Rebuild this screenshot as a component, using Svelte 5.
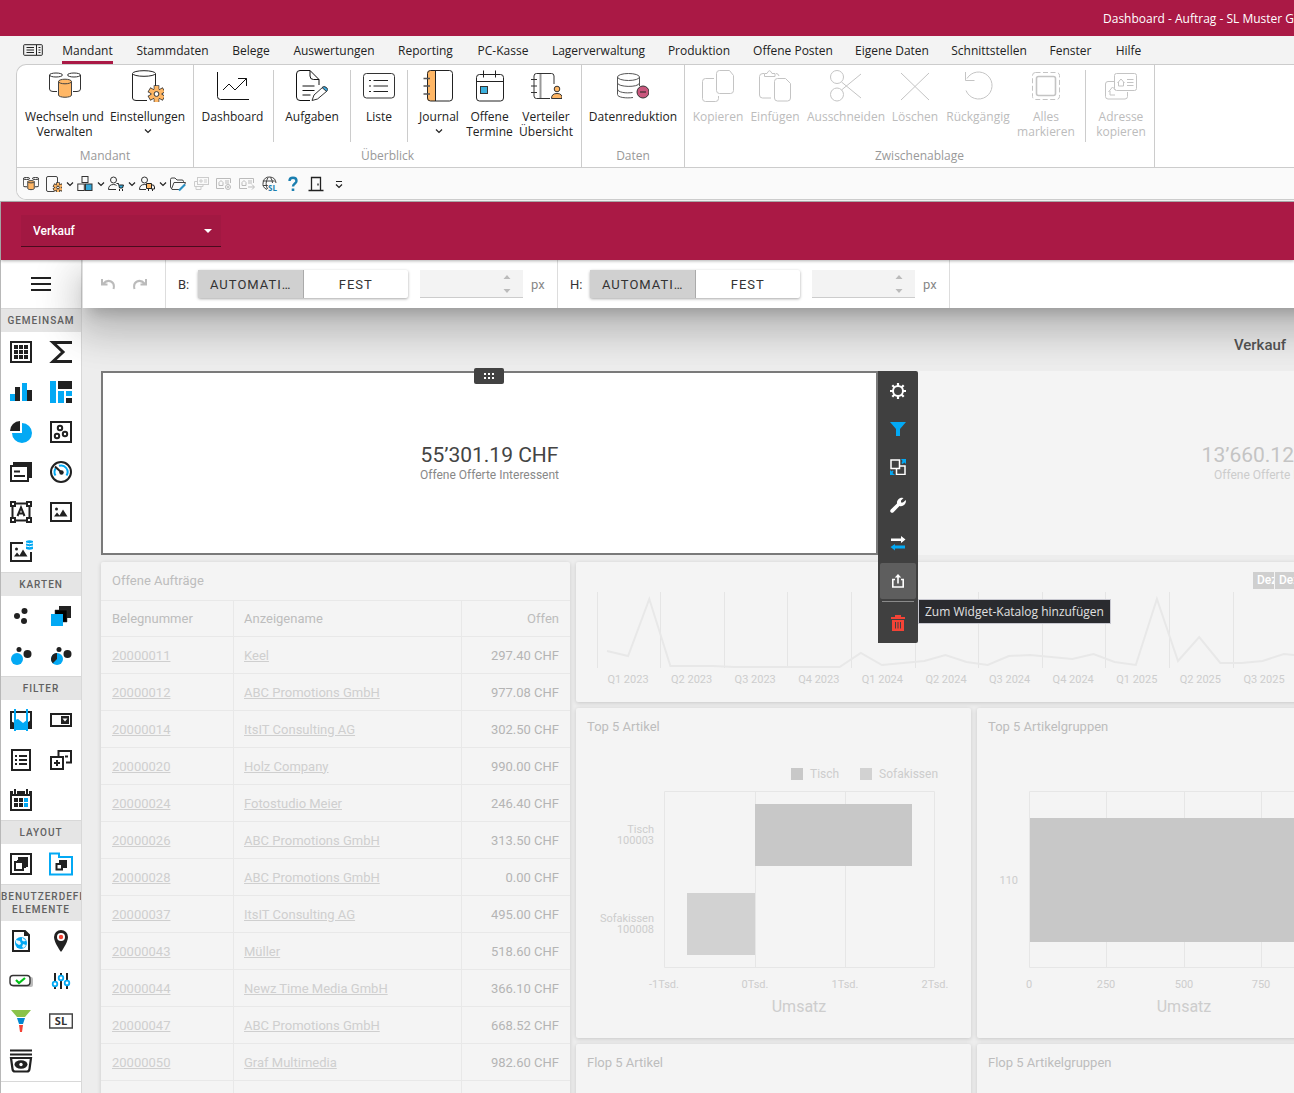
<script lang="ts">
  type RibbonItem = { sep?: boolean; label?: string; icon?: string; width?: number; drop?: boolean };
  type RibbonGroup = { name: string; disabled?: boolean; items: RibbonItem[] };

  const gear = (cx: number, cy: number, r: number, fill: string) => {
    const teeth = [0, 60, 120, 180, 240, 300]
      .map((a) => `<rect x="${cx - r * 0.26}" y="${cy - r}" width="${r * 0.52}" height="${r * 0.5}" transform="rotate(${a} ${cx} ${cy})"/>`)
      .join('');
    return `<g fill="${fill}" stroke="#333" stroke-width="1.4">${teeth}</g><circle cx="${cx}" cy="${cy}" r="${r * 0.68}" fill="${fill}" stroke="#333" stroke-width=".8"/><g fill="${fill}">${teeth}</g><circle cx="${cx}" cy="${cy}" r="${r * 0.3}" fill="#fff" stroke="#333"/>`;
  };

  const cylinders = `<g stroke="#333"><path d="M8 21.5H4Q.5 21.5.5 19V5"/><ellipse cx="7" cy="5" rx="6.5" ry="2"/><path d="M24 21.5h4q3.5 0 3.500-2.5V5"/><ellipse cx="25" cy="5" rx="6.5" ry="2"/></g><path d="M9.500 11.500V25c0 3 13 3 13 0V11.500z" fill="#ffb766" stroke="#444"/><ellipse cx="16" cy="11.500" rx="6.500" ry="2.300" fill="#ffb766" stroke="#444"/>`;

  // 32px ribbon icons
  const big: Record<string, string> = {
    cylinders,
    settings: `<path d="M15 30.5H4Q.5 30.5.5 28V4M23.5 4v12" stroke="#222"/><ellipse cx="12" cy="3.5" rx="11.5" ry="2.8" stroke="#222"/>${gear(24.5, 24, 8, '#ffb766')}`,
    trend: `<path d="M.5 2v24.5q0 3 3 3H32" stroke="#111"/><path d="M6 20l6-6 6 6L29.5 8.500M21 8.500h8.500V16" stroke="#111"/>`,
    tasks: `<path d="M14 30.5H4Q.5 30.5.5 27V4Q.5.5 4 .5h10l9 9V15M14 .5V6q0 3.500 3.500 3.500H23M6.500 16h12M6.500 20.500h12M6.500 25h8" stroke="#111"/><path d="M16 30.500l2-5.500 9-8 4 4-9.500 8z" stroke="#333" fill="#fff"/><path d="M26 17.500q2-2 4.500 0t0 4z" fill="#3ba7dd" stroke="#333"/>`,
    list: `<rect x=".5" y="3.5" width="31" height="24.5" rx="3" stroke="#333"/><path d="M10.500 10.500H25M10.500 16H25M10.500 21.500H25M6 10.500h2M6 16h2M6 21.500h2" stroke="#222"/>`,
    journal: `<path d="M7 .5h6v30.500H7q-3 0-3-3v-24q0-3.500 3-3.500z" fill="#ffb766"/><rect x="4.500" y=".5" width="25" height="30.500" rx="3" stroke="#222"/><path d="M12.500.5V31" stroke="#222"/><path d="M.5 8.500H7M.5 16H7M.5 24H7" stroke="#555" stroke-width="1.5"/>`,
    calendar: `<rect x="2.500" y="4.500" width="27" height="26.500" rx="3" stroke="#222"/><path d="M2.500 11.500h27M9.500.5v7M21.500.5v7" stroke="#222"/><rect x="6.500" y="16.500" width="7" height="7" fill="#3bb0dd" stroke="#333"/>`,
    distribution: `<path d="M20 28.500H6.500q-2.500 0-2.500-2.500V6q0-2.500 2.500-2.500h15q2.500 0 2.500 2.500v8M1 9.500h6M1 16h6M1 22.500h6" stroke="#333"/><path d="M10.500 4v24" stroke="#999" stroke-width="2"/><circle cx="27" cy="19" r="2.800" fill="#ffb766" stroke="#333"/><path d="M21.500 28.500q0-5 5.500-5t5 5z" fill="#ffb766" stroke="#333"/>`,
    reduction: `<g stroke="#555"><ellipse cx="11.500" cy="7" rx="11" ry="3.500"/><path d="M.5 7v17.500c0 3 9 4 15.500 3M22.500 7v9M.5 13c0 4 21 5 22 0M.5 19c0 3.500 9 4.500 15 3.500"/></g><circle cx="26" cy="22" r="6" fill="#c9577d" stroke="#333"/><path d="M23 22h6" stroke="#222"/>`,
    copy: `<path d="M12 8.500H3.500Q.5 8.500.5 11.500v17q0 3 3 3h10q3 0 3-3V26"/><path d="M17.500.5h10l4 5v15q0 3-3 3h-11q-3 0-3-3v-17q0-3 3-3z"/>`,
    paste: `<path d="M5 3.500H4Q.5 3.500.5 6.500v18.500q0 3 3 3H12M17 3.500q2.500 0 3 2.500"/><path d="M5.500 6.500V3.500h2.500q2.500-5.500 5 0H16v3z"/><path d="M18.500 8.500h8l5 5v14.500q0 3-3 3h-10q-3 0-3-3V11.500q0-3 3-3z"/>`,
    cut: `<circle cx="7" cy="7" r="6.500"/><circle cx="7" cy="24.500" r="6.500"/><path d="M11.500 12L31 28M11.500 20L31 4"/>`,
    remove: `<path d="M2 3l28 27M30 3L2 30"/>`,
    undo: `<path d="M4 20.500A13.500 13.500 0 1 0 5 8.500"/><path d="M3.500 2v8.500h9"/>`,
    selectAll: `<rect x="2.500" y="2.500" width="27" height="27" rx="3" stroke-dasharray="5 2.500"/><rect x="6.500" y="6.500" width="19" height="19" rx="2" stroke-width="1.6"/>`,
    address: `<path d="M9 11.500H3Q.5 11.500.5 14v12.500q0 2.500 2.500 2.500h17q2.500 0 2.500-2.500V22M3.500 22l4-5 3 3M5 21v4h5"/><rect x="9.500" y="3.500" width="22" height="17" rx="2"/><path d="M12.500 13l3.500-4 3.500 4M13.500 12v4h5v-4M22 9.500h6.500M22 12.500h6.500M22 15.500h6.500"/>`
  };

  // 16px quick access icons
  const small: Record<string, string> = {
    cylinders: `<g transform="scale(.5)" stroke-width="2">${cylinders}</g>`,
    settings: `<path d="M8 15.500H2Q.5 15.500.5 14V2Q.5.500 2 .5h8q1.500 0 1.500 1.500v6" stroke="#444"/>${gear(12, 11.5, 4.5, '#ffb766')}`,
    cubes: `<g stroke="#333"><rect x="5" y=".5" width="6" height="6"/><rect x=".8" y="8" width="6.500" height="6.500"/><rect x="8.500" y="8" width="6.500" height="6.500" fill="#35a7d8"/></g>`,
    customer: `<g stroke="#333"><circle cx="5.500" cy="4" r="3"/><path d="M8 13.500H.5q0-5 5-5 2 0 3 1"/></g><path d="M8.500 7.500h2l1 4.500h3l1-3h-4" stroke="#222" fill="#35a7d8"/><path d="M11 14h1M14 14h1" stroke="#222" stroke-width="2"/>`,
    supplier: `<g stroke="#333"><circle cx="5.500" cy="4" r="3"/><path d="M7 13.500H.5q0-5 5-5 2 0 3 1"/></g><path d="M7.500 7.500h5v5h-5z" fill="#ffb766" stroke="#222"/><path d="M12.500 9h2l1 2v2h-3z" stroke="#222"/><path d="M9 14h1M13 14h1" stroke="#222" stroke-width="2"/>`,
    folder: `<path d="M9 13.500H2L.5 11V3.500Q.5 2 2 2h3l2 2h5q1.500 0 1.500 1.500V6M1.500 13L4 6.500h11.500l-1 2.500" stroke="#444"/><path d="M9 14.500l6-6" stroke="#2b8fc4" stroke-width="2.200"/>`,
    cards: `<g stroke="#ccc"><rect x="4.500" y="1.500" width="11" height="7"/><path d="M4 5.500H1.500v5H10V9M3 10.500v3h5V11M7 4h2v2H7zM11 4h3M11 6h3"/></g>`,
    cardGear: `<g stroke="#bbb"><path d="M8 12.500H.5v-10h14V7M3 6.500l2-2 2 2v3H3zM9 5h4M9 7h4"/><circle cx="12" cy="11" r="2.500"/><circle cx="12" cy="11" r=".8"/></g>`,
    cardArrow: `<g stroke="#bbb"><path d="M8 12.500H.5v-10h14V7M3 6.500l2-2 2 2v3H3zM9 5h4M9 7h4M9 11h6M13 8.500l2.500 2.500-2.500 2.500"/></g>`,
    globe: `<g stroke="#444"><path d="M5 13.500A6.500 6.500 0 1 1 14 7"/><path d="M5.500 13Q2.500 7.500 6 1.500M8.500 1.500Q10.500 4 10.500 7M.8 5h12M.8 9.500h5"/></g><text x="6" y="15" font-family="Open Sans, sans-serif" font-size="8" font-weight="700" fill="#1b7fb0">SL</text>`,
    help: `<path d="M4.500 5Q4.500 1.800 8 1.800T11.500 5C11.500 7.500 8 7.500 8 10.500" stroke="#1b7fb0" stroke-width="2.400"/><path d="M8 12.500v2.500" stroke="#1b7fb0" stroke-width="2.600"/>`,
    door: `<path d="M.5 14.500h15M3.500 14.500v-13h9v13M10 7.500v2" stroke="#222" stroke-width="1.300"/>`,
    more: `<path d="M5 5.500h6M5 8.500l3 3 3-3" stroke="#222" stroke-width="1.200"/>`
  };

  const K = '#212121';
  const B = '#03a9f4';
  // 24px toolbox icons
  const tool: Record<string, string> = {
    grid: `<path d="M2 2h20v20H2z" stroke="${K}" stroke-width="2"/><path d="M5 5h14v14H5z" fill="${K}"/><path d="M5 9.500h14M5 14.500h14M9.500 5v14M14.500 5v14" stroke="#fff"/>`,
    pivot: `<path d="M23 2.500H4L14 12 4 21.500h19" stroke="${K}" stroke-width="3"/>`,
    bars: `<path d="M1 14h5v7H1zM13 3h5v18h-5z" fill="${B}"/><path d="M6 7h5v14H6zM18 10h5v11h-5z" fill="${K}"/>`,
    treemap: `<path d="M1 1h6v22H1zM9 11h6v12H9zM17 11h6v5h-6z" fill="${B}"/><path d="M9 1h14v8H9zM17 18h6v5h-6z" fill="${K}"/>`,
    pie: `<path d="M13 3A10 10 0 1 1 3 13h10z" fill="${B}"/><path d="M11 1v10H1A10 10 0 0 1 11 1z" fill="${K}"/>`,
    scatter: `<path d="M2 2h20v20H2z" stroke="${K}" stroke-width="2"/><g stroke="${K}" stroke-width="2"><circle cx="11" cy="8" r="2.200"/><circle cx="8" cy="16" r="2.200"/><circle cx="16" cy="14" r="2.200"/></g>`,
    card: `<path d="M4 2h19v16h-3V5H4z" fill="${K}"/><path d="M2 6h17v15H2z" stroke="${K}" stroke-width="2" fill="#fff"/><path d="M5 11.500h6M5 16h11" stroke="${K}" stroke-width="1.800"/>`,
    gauge: `<circle cx="12" cy="12" r="10" stroke="${K}" stroke-width="2"/><path d="M6.500 15.500A6.500 6.500 0 0 1 7 8M10 5.800A6.500 6.500 0 0 1 17.500 15.500" stroke="${B}" stroke-width="2"/><path d="M6 6.500l6 5.500" stroke="${K}" stroke-width="2"/><circle cx="12.500" cy="12.500" r="2.200" fill="${K}"/>`,
    textbox: `<path d="M3.500 3.500h17v17h-17z" stroke="${K}" stroke-width="2"/><g fill="#fff" stroke="${K}" stroke-width="2"><path d="M2 2h4v4H2zM18 2h4v4h-4zM2 18h4v4H2zM18 18h4v4h-4z"/></g><path d="M8.500 16L12 7.500 15.500 16M9.500 13.500h5" stroke="${K}" stroke-width="2"/>`,
    image: `<path d="M2 3h20v18H2z" stroke="${K}" stroke-width="2"/><circle cx="7.500" cy="9" r="1.500" fill="${K}"/><path d="M5 16.500l3-4 2.500 3 3.500-6 4.500 7z" fill="${K}"/>`,
    boundImage: `<path d="M14 3H2v18h20V12" stroke="${K}" stroke-width="2"/><circle cx="7.500" cy="9" r="1.500" fill="${K}"/><path d="M5 16.500l3-4 2.500 3 3.500-6 4.500 7z" fill="${K}"/><path d="M17 1q3.500-1.500 7 0v8q-3.500 1.500-7 0z" fill="${B}"/><path d="M17 3q3.500 1.500 7 0M17 6q3.500 1.500 7 0" stroke="#fff"/>`,
    geoPoint: `<g fill="${K}"><circle cx="15.500" cy="7" r="3"/><circle cx="8" cy="12" r="3"/><circle cx="15" cy="17" r="3"/></g>`,
    choropleth: `<path d="M10 2h12v12H10z" fill="${K}"/><path d="M6 6h12v12H6z" fill="#000" stroke="#333" stroke-width=".5"/><path d="M2 10h12v12H2z" fill="${B}"/>`,
    bubble: `<circle cx="8" cy="15" r="6" fill="${B}"/><g fill="${K}"><circle cx="10" cy="5.500" r="2.500"/><circle cx="18.500" cy="10" r="4"/></g>`,
    pieMap: `<circle cx="8" cy="15" r="6" fill="${B}"/><g fill="${K}"><path d="M8 15V9a6 6 0 0 0-4.200 10.200z"/><circle cx="10" cy="5.500" r="2.500"/><circle cx="18.500" cy="10" r="4"/></g>`,
    range: `<path d="M2 20V4h20v16" stroke="${K}" stroke-width="2"/><path d="M1 13l5 2v6H1zM18 15l5-4v10h-5z" fill="${K}"/><path d="M6 12l3-1 5 4 4-3v10H6z" fill="${B}"/><path d="M6 1v22M18 1v22" stroke="${B}" stroke-width="2"/>`,
    combo: `<path d="M2 6h20v12H2z" stroke="${K}" stroke-width="2"/><path d="M12 8h8v8h-8z" fill="${K}"/><path d="M13.500 10.500h5L16 13.500z" fill="#fff"/>`,
    listBox: `<path d="M3 2h18v20H3z" stroke="${K}" stroke-width="2"/><path d="M6 8h2M6 12h2M6 16h2M10 8h8M10 12h8M10 16h8" stroke="${K}" stroke-width="2"/>`,
    tree: `<path d="M9.500 8V3H22v11.500h-5M16 8.500h3" stroke="${K}" stroke-width="2"/><path d="M2 9h12v12H2z" fill="#fff" stroke="${K}" stroke-width="2"/><path d="M8 12v6M5 15h6" stroke="${K}" stroke-width="2"/>`,
    date: `<path d="M2 4h20v18H2z" stroke="${K}" stroke-width="2"/><path d="M2 4h20v4H2z" fill="${K}"/><path d="M6 1v5M18 1v5" stroke="#fff" stroke-width="4"/><path d="M6 1v5M18 1v5" stroke="${K}" stroke-width="2"/><path d="M5 10h4v4H5zM10 10h4v4h-4zM5 15h4v4H5zM10 15h4v4h-4z" fill="${K}"/><path d="M15 10h4v4h-4zM15 15h4v4h-4z" fill="${B}"/>`,
    group: `<path d="M2 2h20v20H2z" stroke="${K}" stroke-width="2"/><path d="M9 5h10v10h-3V8H9z" fill="${K}"/><path d="M8 8h9v8H8z" fill="${K}"/><path d="M6 10h8v8H6z" fill="#fff" stroke="${K}" stroke-width="2"/>`,
    tabs: `<path d="M1 1.500h9V5h13v17.500H1z" stroke="${B}" stroke-width="2"/><path d="M10 8h8v8h-8z" fill="${K}"/><path d="M7.500 12h5.500v5.500H7.500z" fill="#fff" stroke="${K}" stroke-width="2"/>`,
    webPage: `<path d="M4 2h12l4 4v16H4z" stroke="${K}" stroke-width="2"/><path d="M15 1v6h6z" fill="${K}"/><circle cx="12" cy="14" r="6" fill="${B}"/><path d="M7 11l4 1 1 3-2 1-3-2zM13 8.500l4 3-2 1-2-1zM14 15l3 1-2 3-2-1z" fill="#e8f6fd"/>`,
    pin: `<path d="M12 1a7 7 0 0 0-7 7c0 5.500 7 15 7 15s7-9.500 7-15a7 7 0 0 0-7-7z" fill="${K}"/><circle cx="12" cy="8" r="4" fill="#fff"/><circle cx="12" cy="8" r="2.200" fill="#f44336"/>`,
    check: `<rect x="3" y="8" width="21" height="10" rx="2" fill="#bbb"/><rect x="1" y="6.500" width="20" height="10" rx="3" fill="#fff" stroke="#333" stroke-width="1.400"/><path d="M7 11l3 3 6-5" stroke="#00c217" stroke-width="2.200"/>`,
    sliders: `<path d="M6 4v16M12 4v16M18 4v16" stroke="${K}" stroke-width="2"/><g fill="#fff" stroke="${B}" stroke-width="1.800"><circle cx="6" cy="15" r="2.300"/><circle cx="12" cy="9" r="2.300"/><circle cx="18" cy="14" r="2.300"/></g>`,
    funnel: `<path d="M2 1h20l-6 7H8z" fill="#8bc34a"/><path d="M8 9h8l-2 6h-4z" fill="#0288d1"/><path d="M10 16h4l-1 7h-2z" fill="#f44336"/>`,
    logo: `<path d="M.7 5h22.600v14H.7z" stroke="#444" stroke-width="1.400"/><text x="12" y="16" text-anchor="middle" font-family="Open Sans, sans-serif" font-size="11" font-weight="700" fill="#333">SL</text>`,
    archive: `<path d="M1 1.500h22M1 5.500h22" stroke="${K}" stroke-width="2"/><path d="M2 9h20l-1.500 11q-.3 2.500-2.500 2.500H6Q3.800 22.500 3.500 20z" stroke="${K}" stroke-width="2.200"/><ellipse cx="12" cy="15.500" rx="6.500" ry="4.200" fill="${K}"/><circle cx="12" cy="15.500" r="1.700" fill="#fff"/>`
  };

  // 16px widget action icons
  const widget: Record<string, string> = {
    gear: `<circle cx="8" cy="8" r="5" stroke="#fff" stroke-width="2"/><path d="M8 0v3M8 13v3M0 8h3M13 8h3M2.300 2.300l2 2M11.700 11.700l2 2M2.300 13.700l2-2M11.700 4.300l2-2" stroke="#fff" stroke-width="2.200"/>`,
    filter: `<path d="M0 1h16l-6 7v7H6V8z" fill="#03a9f4"/>`,
    convert: `<path d="M1 1h8.500v8.500H1zM10 7h5v8.500H6.500V10" stroke="#fff" stroke-width="1.500"/><path d="M11 0h5v5l-1.500-1.500-2 1.500-1-1 1-2zM0 11l1.500 1.500 1-1 1 1-1 1.500L5 16H0z" fill="#03a9f4"/>`,
    wrench: `<path d="M13.500 1L11 3.500v2h2L15.800 3A5 5 0 0 1 9.500 9L3.500 15.200Q2 16.200.8 15.200T.8 12.500L7 6.500A5 5 0 0 1 13.500 1z" fill="#fff"/>`,
    swap: `<path d="M1 3.500h10V1l4.500 3.500L11 8V6H1z" fill="#fff"/><path d="M15 13.500H5V15.500L.5 12 5 9v1.500h10z" fill="#03a9f4"/>`,
    share: `<path d="M5 6.500H2.800V14h10.400V6.500H11" stroke="#fff" stroke-width="1.600"/><path d="M8 10.500V3" stroke="#fff" stroke-width="1.600"/><path d="M4.800 4.500L8 1l3.200 3.500z" fill="#fff"/>`,
    trash: `<path d="M5 2V0h6v2h4v2H1V2z" fill="#f44336"/><path d="M2 5h12v11H2z" fill="#f44336"/><path d="M5.500 7v6.500M8 7v6.500M10.500 7v6.500" stroke="#404040"/>`
  };

  const tabs = [
    ['Mandant', 75], ['Stammdaten', 95], ['Belege', 62], ['Auswertungen', 104], ['Reporting', 79],
    ['PC-Kasse', 76], ['Lagerverwaltung', 115], ['Produktion', 86], ['Offene Posten', 102],
    ['Eigene Daten', 96], ['Schnittstellen', 98], ['Fenster', 65], ['Hilfe', 51]
  ] as [string, number][];

  const groups: RibbonGroup[] = [
    {
      name: 'Mandant',
      items: [
        { label: 'Wechseln und\nVerwalten', icon: 'cylinders', width: 85 },
        { label: 'Einstellungen', icon: 'settings', width: 81, drop: true }
      ]
    },
    {
      name: 'Überblick',
      items: [
        { label: 'Dashboard', icon: 'trend', width: 67 },
        { sep: true },
        { label: 'Aufgaben', icon: 'tasks', width: 62 },
        { sep: true },
        { label: 'Liste', icon: 'list', width: 42 },
        { sep: true },
        { label: 'Journal', icon: 'journal', width: 48, drop: true },
        { label: 'Offene\nTermine', icon: 'calendar', width: 53 },
        { label: 'Verteiler\nÜbersicht', icon: 'distribution', width: 60 }
      ]
    },
    { name: 'Daten', items: [{ label: 'Datenreduktion', icon: 'reduction', width: 92 }] },
    {
      name: 'Zwischenablage',
      disabled: true,
      items: [
        { label: 'Kopieren', icon: 'copy', width: 56 },
        { label: 'Einfügen', icon: 'paste', width: 58 },
        { label: 'Ausschneiden', icon: 'cut', width: 84 },
        { label: 'Löschen', icon: 'remove', width: 54 },
        { label: 'Rückgängig', icon: 'undo', width: 72 },
        { label: 'Alles\nmarkieren', icon: 'selectAll', width: 64 },
        { sep: true },
        { label: 'Adresse\nkopieren', icon: 'address', width: 56 }
      ]
    }
  ];

  const quick = [
    { icon: 'cylinders' }, { icon: 'settings', drop: true }, { icon: 'cubes', drop: true },
    { icon: 'customer', drop: true }, { icon: 'supplier', drop: true }, { icon: 'folder' },
    { icon: 'cards' }, { icon: 'cardGear' }, { icon: 'cardArrow' }, { icon: 'globe' },
    { icon: 'help' }, { icon: 'door' }, { icon: 'more' }
  ];

  const toolbox = [
    { title: 'Gemeinsam', tools: ['grid', 'pivot', 'bars', 'treemap', 'pie', 'scatter', 'card', 'gauge', 'textbox', 'image', 'boundImage'] },
    { title: 'Karten', tools: ['geoPoint', 'choropleth', 'bubble', 'pieMap'] },
    { title: 'Filter', tools: ['range', 'combo', 'listBox', 'tree', 'date'] },
    { title: 'Layout', tools: ['group', 'tabs'] },
    { title: 'Benutzerdefinierte Elemente', tools: ['webPage', 'pin', 'check', 'sliders', 'funnel', 'logo', 'archive'] }
  ];

  const orders = [
    ['20000011', 'Keel', '297.40'],
    ['20000012', 'ABC Promotions GmbH', '977.08'],
    ['20000014', 'ItsIT Consulting AG', '302.50'],
    ['20000020', 'Holz Company', '990.00'],
    ['20000024', 'Fotostudio Meier', '246.40'],
    ['20000026', 'ABC Promotions GmbH', '313.50'],
    ['20000028', 'ABC Promotions GmbH', '0.00'],
    ['20000037', 'ItsIT Consulting AG', '495.00'],
    ['20000043', 'Müller', '518.60'],
    ['20000044', 'Newz Time Media GmbH', '366.10'],
    ['20000047', 'ABC Promotions GmbH', '668.52'],
    ['20000050', 'Graf Multimedia', '982.60']
  ];

  const quarters = ['Q1 2023', 'Q2 2023', 'Q3 2023', 'Q4 2023', 'Q1 2024', 'Q2 2024', 'Q3 2024', 'Q4 2024', 'Q1 2025', 'Q2 2025', 'Q3 2025'];
  const quarterStep = 63.6;
  // one value per month, as the height over the baseline
  const months = [16, 11, 68, 1, 1, 1, 0, 0, 0, 0, 0, 0, 14, 2, 4, 6, 12, 5, 2, 11, 12, 10, 8, 13, 5, 2, 68, 6, 30, 4, 4, 6, 13, 11];
  const line = months.map((v, i) => `${(31 + i * 21.15).toFixed(1)},${105 - v}`).join(' ');

  const widgetActions = ['gear', 'filter', 'convert', 'wrench', 'swap', 'share'];

  let activeTab = $state('Mandant');
  let fixed = $state({ B: false, H: false });
</script>

{#snippet chevron()}
  <svg class="chevron" viewBox="0 0 8 8"><path d="M1 2.500l3 3 3-3" fill="none" stroke="#222" stroke-width="1.200" /></svg>
{/snippet}

{#snippet sizeGroup(axis: 'B' | 'H')}
  <div class="size-group">
    <label for="size-{axis}">{axis}:</label>
    <div class="toggle">
      <button class:on={!fixed[axis]} onclick={() => (fixed[axis] = false)}>AUTOMATISCH</button>
      <button class:on={fixed[axis]} onclick={() => (fixed[axis] = true)}>FEST</button>
    </div>
    <div class="number">
      <input id="size-{axis}" type="text" disabled={!fixed[axis]} />
      <svg viewBox="0 0 8 20"><path d="M4 1l3.500 4h-7zM4 19l3.500-4h-7z" fill="#bbb" /></svg>
    </div>
    <span class="unit">px</span>
  </div>
{/snippet}

<div class="window">
  <header class="titlebar"><span>Dashboard - Auftrag - SL Muster GmbH</span></header>

  <nav class="tabs">
    <button class="backstage" aria-label="Menü">
      <svg viewBox="0 0 20 12"><path d="M1.500.7h17q.8 0 .8.800v9q0 .8-.8.800h-17q-.8 0-.8-.8v-9q0-.8.8-.8zM13.500 1v10M3.500 3.500H11M3.500 6H11M3.500 8.500H11M15.500 3.500h2M15.500 6h2M15.500 8.500h2" fill="none" stroke="#222" /></svg>
    </button>
    {#each tabs as [name, width]}
      <button class="tab" class:active={activeTab === name} style="width: {width}px" onclick={() => (activeTab = name)}>
        <span>{name}</span>
      </button>
    {/each}
  </nav>

  <div class="ribbon">
    <div class="groups">
      {#each groups as group}
        <section class="group" class:disabled={group.disabled}>
          <div class="items">
            {#each group.items as item}
              {#if item.sep}
                <i class="sep"></i>
              {:else}
                <button class="item" style="width: {item.width}px" disabled={group.disabled}>
                  <svg viewBox="0 0 32 32" fill="none" stroke={group.disabled ? '#c4c4c4' : undefined}>{@html big[item.icon ?? '']}</svg>
                  <span>{item.label}</span>
                  {#if item.drop}{@render chevron()}{/if}
                </button>
              {/if}
            {/each}
          </div>
          <h2>{group.name}</h2>
        </section>
      {/each}
    </div>
    <div class="quick">
      {#each quick as q}
        <button class:drop={q.drop} aria-label={q.icon}>
          <svg class="q-icon" viewBox="0 0 16 16" fill="none">{@html small[q.icon]}</svg>
          {#if q.drop}{@render chevron()}{/if}
        </button>
      {/each}
    </div>
  </div>

  <div class="designer">
    <header class="app-bar">
      <div class="select">
        <select aria-label="Dashboard"><option>Verkauf</option></select>
        <svg viewBox="0 0 8 4"><path d="M0 0h8L4 4z" fill="#fff" /></svg>
      </div>
    </header>

    <div class="body">
      <aside>
        <button class="menu" aria-label="Menü">
          <svg viewBox="0 0 20 14"><path d="M0 1h20M0 7h20M0 13h20" stroke="#212121" stroke-width="2" /></svg>
        </button>
        {#each toolbox as section}
          <h3>{section.title}</h3>
          <div class="tools">
            {#each section.tools as t}
              <button aria-label={t}><svg viewBox="0 0 24 24" fill="none">{@html tool[t]}</svg></button>
            {/each}
          </div>
        {/each}
      </aside>

      <div class="main">
        <div class="toolbar">
          <div class="history">
            <button aria-label="Rückgängig"><svg viewBox="0 0 16 16"><path d="M2 3v5.500h5.500M3 8Q7 3.500 11 5.500T13.500 13" fill="none" stroke="#bbb" stroke-width="2" /></svg></button>
            <button aria-label="Wiederholen"><svg viewBox="0 0 16 16"><path d="M14 3v5.500H8.500M13 8Q9 3.500 5 5.500T2.500 13" fill="none" stroke="#bbb" stroke-width="2" /></svg></button>
          </div>
          {@render sizeGroup('B')}
          {@render sizeGroup('H')}
        </div>

        <div class="surface">
          <div class="canvas">
            <h1>Verkauf</h1>

            <div class="kpis">
              <div class="kpi selected">
                <strong>55’301.19 CHF</strong>
                <span>Offene Offerte Interessent</span>
                <div class="handle">
                  <svg viewBox="0 0 10 6" fill="#fff"><path d="M0 0h2v2H0zM4 0h2v2H4zM8 0h2v2H8zM0 4h2v2H0zM4 4h2v2H4zM8 4h2v2H8z" /></svg>
                </div>
                <div class="actions">
                  {#each widgetActions as a}
                    <button class:hover={a === 'share'} aria-label={a}>
                      <svg viewBox="0 0 16 16" fill="none">{@html widget[a]}</svg>
                    </button>
                  {/each}
                  <hr />
                  <button aria-label="Löschen"><svg viewBox="0 0 16 16" fill="none">{@html widget.trash}</svg></button>
                  <div class="tooltip" role="tooltip">Zum Widget-Katalog hinzufügen</div>
                </div>
              </div>
              <div class="kpi">
                <strong>13’660.12 CHF</strong>
                <span>Offene Offerte Kunde</span>
              </div>
            </div>

            <div class="cards">
              <section class="card orders">
                <h2>Offene Aufträge</h2>
                <table>
                  <thead>
                    <tr><th>Belegnummer</th><th>Anzeigename</th><th>Offen</th></tr>
                  </thead>
                  <tbody>
                    {#each orders as [no, name, amount]}
                      <tr>
                        <td><a href="#{no}">{no}</a></td>
                        <td><a href="#{no}">{name}</a></td>
                        <td>{amount} CHF</td>
                      </tr>
                    {/each}
                    <tr><td></td><td></td><td></td></tr>
                  </tbody>
                </table>
              </section>

              <div class="charts">
                <section class="card timeline">
                  <svg viewBox="0 0 720 140" width="720" height="140">
                    {#each quarters as q, i}
                      <path d="M{Math.floor(21 + i * quarterStep)}.500 30v76" stroke="#e5e5e5" />
                      <text x={52 + i * quarterStep} y="121" text-anchor="middle">{q}</text>
                    {/each}
                    <polyline points={line} fill="none" stroke="#e8e8e8" stroke-width="2" />
                  </svg>
                  <div class="tags"><span>Dez.</span><span>Dez.</span></div>
                </section>

                <div class="pair">
                  <section class="card chart">
                    <h2>Top 5 Artikel</h2>
                    <svg viewBox="0 0 395 290" width="395" height="290">
                      <path d="M215 20h12v12h-12z" fill="#c8c8c8" />
                      <text class="legend" x="234" y="30">Tisch</text>
                      <path d="M284 20h12v12h-12z" fill="#d2d2d2" />
                      <text class="legend" x="303" y="30">Sofakissen</text>
                      <path d="M88.500 43.500h270v176h-270zM179.500 44v175M269.500 44v175" fill="none" stroke="#e6e6e6" />
                      <path d="M179 56h157v62H179z" fill="#c8c8c8" />
                      <path d="M111 145h68v62h-68z" fill="#d2d2d2" />
                      <g text-anchor="end">
                        <text x="78" y="85">Tisch</text>
                        <text x="78" y="96">100003</text>
                        <text x="78" y="174">Sofakissen</text>
                        <text x="78" y="185">100008</text>
                      </g>
                      <g text-anchor="middle">
                        <text x="88" y="240">-1Tsd.</text>
                        <text x="179" y="240">0Tsd.</text>
                        <text x="269" y="240">1Tsd.</text>
                        <text x="359" y="240">2Tsd.</text>
                        <text class="axis" x="223" y="264">Umsatz</text>
                      </g>
                    </svg>
                  </section>
                  <section class="card chart">
                    <h2>Top 5 Artikelgruppen</h2>
                    <svg viewBox="0 0 395 290" width="395" height="290">
                      <path d="M52.500 43.500h310v176h-310zM129.500 44v175M207.500 44v175M284.500 44v175" fill="none" stroke="#e6e6e6" />
                      <path d="M53 70h300v124H53z" fill="#c8c8c8" />
                      <text x="41" y="136" text-anchor="end">110</text>
                      <g text-anchor="middle">
                        <text x="52" y="240">0</text>
                        <text x="129" y="240">250</text>
                        <text x="207" y="240">500</text>
                        <text x="284" y="240">750</text>
                        <text class="axis" x="207" y="264">Umsatz</text>
                      </g>
                    </svg>
                  </section>
                  <section class="card chart"><h2>Flop 5 Artikel</h2></section>
                  <section class="card chart"><h2>Flop 5 Artikelgruppen</h2></section>
                </div>
              </div>
            </div>
          </div>
        </div>
      </div>
    </div>
  </div>
</div>

<style>
  :global(body) {
    margin: 0;
    overflow: hidden;
  }
  .window {
    display: flex;
    flex-direction: column;
    height: 100vh;
    background: #f3f3f3;
    color: #222;
    font: 12px/15px 'Open Sans', 'Noto Sans', sans-serif;
    overflow: hidden;
  }
  button {
    padding: 0;
    border: 0;
    background: none;
    color: inherit;
    font: inherit;
    letter-spacing: inherit;
  }
  h1, h2, h3 {
    margin: 0;
    font-weight: 400;
  }
  svg {
    display: block;
    flex: none;
  }

  /* Title bar and tabs */
  .titlebar {
    display: flex;
    justify-content: flex-end;
    align-items: center;
    height: 36px;
    flex: none;
    background: #aa1945;
    color: #fff;
  }
  .titlebar span {
    width: 191px;
    overflow: hidden;
    white-space: nowrap;
  }
  .tabs {
    display: flex;
    flex: none;
    height: 28px;
    padding-left: 23px;
  }
  .backstage {
    width: 27px;
  }
  .backstage svg {
    width: 20px;
    height: 12px;
  }
  .tab {
    display: flex;
    justify-content: center;
    flex: none;
    white-space: nowrap;
  }
  .tab span {
    height: 18px;
    padding-top: 7px;
    border-bottom: 3px solid transparent;
  }
  .tab.active span {
    border-color: #aa1945;
  }

  /* Ribbon */
  .ribbon {
    flex: none;
    margin: 0 0 1px 16px;
    border: 1px solid #ccc;
    border-right: 0;
    border-radius: 10px 0 0 10px;
    background: #fff;
    overflow: hidden;
  }
  .groups {
    display: flex;
    height: 102px;
    border-bottom: 1px solid #ccc;
  }
  .group {
    display: flex;
    flex-direction: column;
    justify-content: space-between;
    padding: 5px 5px 4px;
    border-right: 1px solid #ccc;
  }
  .group h2 {
    color: #999;
    font-size: 12px;
    text-align: center;
  }
  .items {
    display: flex;
  }
  .item {
    display: flex;
    flex-direction: column;
    align-items: center;
    flex: none;
    white-space: pre;
  }
  .item > svg:first-child {
    width: 32px;
    height: 32px;
    margin-bottom: 7px;
  }
  .disabled .item {
    color: #bcbcbc;
  }
  .sep {
    width: 1px;
    height: 72px;
    margin: 0 7px;
    background: #ccc;
  }
  .chevron {
    width: 8px;
    height: 8px;
  }
  .item .chevron {
    margin-top: 3px;
  }
  .quick {
    display: flex;
    align-items: center;
    height: 31px;
    padding-left: 6px;
    background: #fafafa;
  }
  .quick button {
    display: flex;
    align-items: center;
    gap: 4px;
    width: 23px;
  }
  .quick .drop {
    width: 31px;
  }
  .q-icon {
    width: 16px;
    height: 16px;
  }

  /* Designer shell */
  .designer {
    display: flex;
    flex: 1;
    flex-direction: column;
    min-height: 0;
    border-top: 1px solid #b0b0b0;
    border-left: 1px solid #b8b8b8;
    font-family: Roboto, sans-serif;
  }
  .app-bar {
    position: relative;
    z-index: 3;
    flex: none;
    padding: 13px 20px;
    background: #aa1945;
    box-shadow: 0 1px 3px rgba(0, 0, 0, 0.3);
  }
  .select {
    display: flex;
    align-items: center;
    width: 200px;
    height: 31px;
    border-bottom: 1px solid #4a0b1e;
    background: #a21842;
  }
  .select select {
    flex: 1;
    padding: 0 12px;
    border: 0;
    background: none;
    color: #fff;
    font: 500 12px Roboto, sans-serif;
    appearance: none;
  }
  .select svg {
    width: 8px;
    height: 4px;
    margin-right: 9px;
  }
  .body {
    display: flex;
    flex: 1;
    min-height: 0;
  }
  aside {
    flex: none;
    width: 80px;
    border-right: 1px solid #d8d8d8;
    background: #fff;
    overflow: hidden;
  }
  .menu {
    display: flex;
    align-items: center;
    justify-content: center;
    width: 80px;
    height: 48px;
  }
  .menu svg {
    width: 20px;
    height: 14px;
  }
  aside h3 {
    padding: 5px 0;
    border-top: 1px solid #d8d8d8;
    background: #e5e5e5;
    color: #616161;
    font-size: 10px;
    font-weight: 500;
    line-height: 13px;
    letter-spacing: 1px;
    text-align: center;
    text-transform: uppercase;
  }
  .tools {
    display: grid;
    grid-template-columns: 40px 40px;
  }
  .tools:last-child {
    border-bottom: 1px solid #d8d8d8;
  }
  .tools button {
    display: grid;
    place-items: center;
    height: 40px;
  }
  .tools svg {
    width: 24px;
    height: 24px;
  }

  /* Size toolbar */
  .main {
    display: flex;
    flex: 1;
    flex-direction: column;
    min-width: 0;
  }
  .toolbar {
    position: relative;
    z-index: 2;
    display: flex;
    flex: none;
    height: 48px;
    margin-right: -60px;
    border-left: 1px solid #e0e0e0;
    background: #fff;
    box-shadow:
      0 11px 15px -7px rgba(0, 0, 0, 0.2),
      0 24px 38px 3px rgba(0, 0, 0, 0.14),
      0 9px 46px 8px rgba(0, 0, 0, 0.12);
    color: #333;
  }
  .history,
  .size-group {
    display: flex;
    align-items: center;
    border-right: 1px solid #ddd;
  }
  .history {
    gap: 16px;
    padding: 0 17px;
  }
  .history svg {
    width: 16px;
    height: 16px;
  }
  .size-group {
    padding: 0 12px;
  }
  .size-group label {
    width: 20px;
    font-size: 13px;
  }
  .toggle {
    display: flex;
    width: 210px;
    height: 28px;
    border-radius: 2px;
    box-shadow: 0 1px 3px rgba(0, 0, 0, 0.35);
    letter-spacing: 1px;
  }
  .toggle button {
    flex: 1;
    min-width: 0;
    padding: 0 12px;
    font-size: 13px;
    overflow: hidden;
    text-overflow: ellipsis;
    white-space: nowrap;
  }
  .toggle button:first-child {
    border-right: 1px solid #aaa;
  }
  .toggle .on {
    background: #d0d0d0;
  }
  .number {
    display: flex;
    align-items: center;
    width: 103px;
    height: 27px;
    margin: 0 8px 0 12px;
    border-bottom: 1px solid #ccc;
    background: #f3f3f3;
  }
  .number input {
    flex: 1;
    min-width: 0;
    border: 0;
    background: none;
  }
  .number svg {
    width: 8px;
    height: 20px;
    margin-right: 12px;
  }
  .unit {
    width: 14px;
    color: #888;
    font-size: 13px;
  }

  /* Dashboard surface: the canvas is wider than the view */
  .surface {
    flex: 1;
    min-height: 0;
    background: #ededed;
    overflow: hidden;
  }
  .canvas {
    width: 2318px;
    padding-left: 19px;
  }
  .canvas h1 {
    padding: 27px 0 16px;
    color: #555;
    font-size: 15px;
    font-weight: 500;
    line-height: 20px;
    text-align: center;
  }
  .kpis {
    display: flex;
    gap: 4px;
    margin-bottom: 7px;
  }
  .kpi {
    position: relative;
    display: flex;
    flex: 0 0 777px;
    flex-direction: column;
    align-items: center;
    justify-content: center;
    box-sizing: border-box;
    height: 184px;
    background: #f4f4f4;
    color: #ccc;
    white-space: nowrap;
  }
  .kpi strong {
    color: #c4c4c4;
    font-size: 21px;
    font-weight: 400;
    line-height: 24px;
  }
  .kpi span {
    line-height: 16px;
  }
  .selected {
    z-index: 3;
    border: 2px solid #7a7a7a;
    background: #fff;
    color: #888;
  }
  .selected strong {
    color: #444;
  }
  .handle {
    position: absolute;
    top: -5px;
    left: 50%;
    display: grid;
    place-items: center;
    width: 30px;
    height: 16px;
    margin-left: -16px;
    border-radius: 2px;
    background: #424242;
  }
  .handle svg {
    width: 10px;
    height: 6px;
  }
  .actions {
    position: absolute;
    top: -2px;
    left: calc(100% + 2px);
    display: grid;
    gap: 2px;
    padding: 2px;
    border-radius: 0 2px 2px 0;
    background: #404040;
  }
  .actions button {
    display: grid;
    place-items: center;
    width: 36px;
    height: 36px;
    border-radius: 2px;
  }
  .actions button.hover {
    background: #5e5e5e;
  }
  .actions svg {
    width: 16px;
    height: 16px;
  }
  .actions hr {
    width: 32px;
    height: 1px;
    margin: 0 auto 1px;
    border: 0;
    background: #8a8a8a;
  }
  .tooltip {
    position: absolute;
    top: 228px;
    left: 40px;
    padding: 4px 6px;
    border: 1px solid #c8c8d0;
    background: #2a2b2f;
    color: #e0e0e0;
    font-family: 'Open Sans', 'Noto Sans', sans-serif;
  }

  .cards {
    display: flex;
    gap: 6px;
  }
  .card {
    border-radius: 2px;
    background: #f4f4f4;
    box-shadow: 0 1px 4px rgba(0, 0, 0, 0.16);
    overflow: hidden;
  }
  .card h2 {
    padding: 0 11px;
    color: #bdbdbd;
    font-size: 13px;
    line-height: 38px;
  }
  .orders {
    flex: 0 0 469px;
  }
  table {
    width: 100%;
    table-layout: fixed;
    border-spacing: 0;
    color: #b4b4b4;
    font-size: 13px;
  }
  th,
  td {
    height: 36px;
    padding: 0 11px 0 10px;
    border-top: 1px solid #e8e8e8;
    border-right: 1px solid #e8e8e8;
    font-weight: 400;
    text-align: left;
    white-space: nowrap;
  }
  th {
    height: 35px;
    color: #bdbdbd;
  }
  th:first-child,
  td:first-child {
    width: 110px;
    padding-left: 11px;
  }
  th:last-child,
  td:last-child {
    width: 87px;
    padding-right: 11px;
    border-right: 0;
    text-align: right;
  }
  td a {
    color: #cfcfcf;
  }
  .charts {
    display: grid;
    flex: 1;
    align-content: start;
    gap: 6px;
  }
  .timeline {
    position: relative;
    height: 140px;
  }
  .tags {
    position: absolute;
    top: 10px;
    left: 677px;
    display: flex;
    gap: 1px;
    color: #fff;
    font-size: 12px;
    font-weight: 500;
    line-height: 17px;
  }
  .tags span {
    width: 17px;
    padding-left: 4px;
    background: #cfcfcf;
    overflow: hidden;
    white-space: nowrap;
  }
  .pair {
    display: grid;
    grid-template-columns: 395px 395px;
    gap: 6px;
  }
  .chart {
    height: 330px;
  }
  .chart svg {
    margin-top: 2px;
  }
  .card text {
    fill: #cdcdcd;
    font-size: 11px;
  }
  .card text.legend {
    font-size: 12px;
  }
  .card text.axis {
    font-size: 16px;
  }
</style>
